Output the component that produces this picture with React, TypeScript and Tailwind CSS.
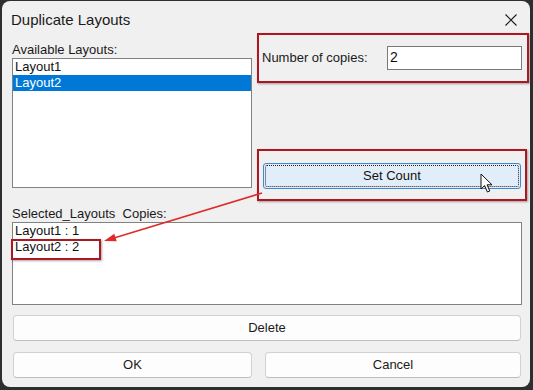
import React from 'react'

const font = { fontFamily: '"Liberation Sans", Arial, sans-serif' }

const CloseIcon: React.FC = () => (
  <svg width="12" height="12" viewBox="0 0 12 12" className="text-[#1a1a1a]">
    <path d="M0.5 0.5 L11.5 11.5 M11.5 0.5 L0.5 11.5" stroke="currentColor" strokeWidth="1.1" fill="none" />
  </svg>
)

const Cursor: React.FC = () => (
  <svg width="14" height="21" viewBox="0 0 14 21">
    <path
      d="M1 1 L1 16 L4.6 12.6 L7.4 19 L9.8 18 L7.1 11.8 L12 11.8 Z"
      fill="#ffffff"
      stroke="#111111"
      strokeWidth="1"
      strokeLinejoin="round"
    />
  </svg>
)

const WinButton: React.FC<{ label: string; className?: string }> = ({ label, className = '' }) => (
  <button
    className={`h-[26px] rounded-[4px] border border-[#d1d1d1] border-b-[#bdbdbd] bg-[#fdfdfd] text-[13px] text-[#1b1b1b] ${className}`}
  >
    {label}
  </button>
)

const Callout: React.FC<{ className: string }> = ({ className }) => (
  <div
    className={`absolute border-2 border-[#ad1820] shadow-[1px_1px_2px_rgba(0,0,0,0.35)] pointer-events-none ${className}`}
  />
)

const App: React.FC = () => {
  const available = ['Layout1', 'Layout2']
  const selected = ['Layout1 : 1', 'Layout2 : 2']

  return (
    <div className="w-[533px] h-[390px] bg-[#2e2e2e] pt-[1px] pl-[2px]" style={font}>
      <div className="relative w-[528px] h-[386px] rounded-[8px] bg-[#f0f0f0] overflow-hidden">
        {/* title bar */}
        <div className="h-[41px] flex items-start justify-between pl-[9px] pr-[13px] pt-[10px]">
          <span className="text-[15px] leading-[18px] text-[#1a1a1a]">Duplicate Layouts</span>
          <div className="pt-[3px]">
            <CloseIcon />
          </div>
        </div>

        <div className="pl-[10px] pr-[8px]">
          <div className="flex gap-[10px]">
            <div className="w-[240px] flex flex-col">
              <span className="text-[13px] leading-[16px] text-[#1a1a1a]">Available Layouts:</span>
              <div className="h-[130px] border border-[#828282] bg-white">
                {available.map((item, i) => (
                  <div
                    key={item}
                    className={`h-[16px] px-[2px] text-[13px] leading-[16px] ${
                      i === 1 ? 'bg-[#0078d7] text-white' : 'text-[#111]'
                    }`}
                  >
                    {item}
                  </div>
                ))}
              </div>
            </div>

            <div className="flex-1 flex flex-col">
              <div className="mt-[4px] flex items-center justify-between">
                <span className="text-[13px] leading-[16px] text-[#1a1a1a]">Number of copies:</span>
                <div className="w-[135px] h-[24px] border border-[#7a7a7a] bg-white px-[2px] text-[14px] leading-[20px] text-[#111]">
                  2
                </div>
              </div>
              <button className="relative mt-[93px] mx-[1px] h-[26px] rounded-[3px] border border-[#3a8ad6] bg-[#e1eefa] text-[13px] text-[#111]">
                <span className="absolute inset-[1px] rounded-[2px] border border-dotted border-[#222]" />
                Set Count
              </button>
            </div>
          </div>

          <div className="mt-[17px] text-[13px] leading-[16px] text-[#1a1a1a] whitespace-pre">
            Selected_Layouts  Copies:
          </div>
          <div className="h-[83px] border border-[#828282] bg-white">
            {selected.map((item) => (
              <div key={item} className="h-[16px] px-[2px] text-[13px] leading-[16px] text-[#111]">
                {item}
              </div>
            ))}
          </div>

          <div className="px-[1px] mt-[10px] flex flex-col">
            <WinButton label="Delete" />
            <div className="mt-[11px] flex gap-[13px]">
              <WinButton label="OK" className="w-[239px]" />
              <WinButton label="Cancel" className="flex-1" />
            </div>
          </div>
        </div>

        {/* annotations */}
        <Callout className="left-[255px] top-[32px] w-[272px] h-[50px]" />
        <Callout className="left-[255px] top-[148px] w-[270px] h-[52px]" />
        <Callout className="left-[9px] top-[238px] w-[90px] h-[21px]" />
        <svg className="absolute inset-0 pointer-events-none" width="528" height="386">
          <line x1="260" y1="192" x2="112" y2="237" stroke="#e02a2a" strokeWidth="1.6" />
          <polygon points="102,240 114.7,240.3 112.3,232.7" fill="#e02a2a" />
        </svg>
        <div className="absolute left-[478px] top-[172px] pointer-events-none">
          <Cursor />
        </div>
      </div>
    </div>
  )
}

export default App
